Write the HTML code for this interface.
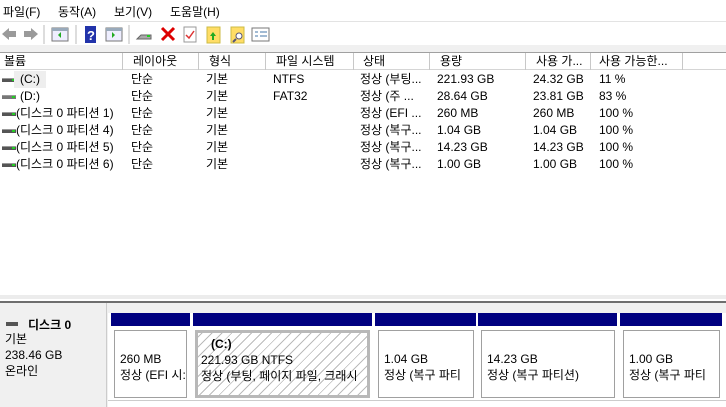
<!DOCTYPE html>
<html><head><meta charset="utf-8"><style>
*{margin:0;padding:0;box-sizing:border-box}
body{width:726px;height:407px;overflow:hidden;background:#fff;font-family:"Liberation Sans","Noto Sans CJK KR",sans-serif;font-size:12px;color:#000;position:relative}
.a{position:absolute;white-space:nowrap}
.menu span{position:absolute;top:3px}
.hdr{position:absolute;top:52px;left:0;width:726px;height:18px;border-top:1px solid #a0a0a0;border-bottom:1px solid #d5d5d5;background:#fff}
.hdr div{position:absolute;top:0;height:17px;line-height:16px;border-right:1px solid #c8c8c8;padding-left:4px}
.row{position:absolute;left:0;width:726px;height:17px;line-height:17px}
.row span{position:absolute}
.ico{position:absolute;left:2px;top:7px;width:14px;height:4px;background:#555;border-top:1px solid #999}
.ico:after{content:"";position:absolute;right:1px;top:0;width:3px;height:2px;background:#2c2}
.bar{position:absolute;top:313px;height:13px;background:#000080}
.box{position:absolute;top:330px;height:68px;border:1px solid #a0a0a0;background:#fff;padding:20px 0 0 5px;line-height:16px;overflow:hidden;white-space:nowrap}
</style></head><body>
<div class="menu"><span style="left:3px">파일(F)</span><span style="left:58px">동작(A)</span><span style="left:114px">보기(V)</span><span style="left:170px">도움말(H)</span></div>
<div class="a" style="left:0;top:21px;width:726px;height:1px;background:#e3e3e3"></div>
<div class="a" style="left:0;top:45px;width:726px;height:7px;background:#f0f0f0"></div>
<svg class="a" style="left:0;top:22px" width="280" height="23">
<path d="M2 12 l7-6 v3 h7 v6 h-7 v3z" fill="#9a9a9a"/>
<path d="M38 12 l-7-6 v3 h-7 v6 h7 v3z" fill="#9a9a9a"/>
<line x1="44" y1="3" x2="44" y2="22" stroke="#bbb"/>
<rect x="52" y="6" width="16" height="13" fill="#eef" stroke="#777"/><rect x="52" y="6" width="16" height="3" fill="#9ab"/><path d="M61 10 l-3 3 3 3z" fill="#2a2"/>
<line x1="76" y1="3" x2="76" y2="22" stroke="#bbb"/>
<rect x="85" y="4" width="11" height="17" fill="#2233aa"/><text x="87" y="18" fill="#fff" font-size="13" font-weight="bold">?</text>
<rect x="106" y="6" width="16" height="13" fill="#eef" stroke="#777"/><rect x="106" y="6" width="16" height="3" fill="#9ab"/><path d="M112 10 l3 3 -3 3z" fill="#2a2"/>
<line x1="129" y1="3" x2="129" y2="22" stroke="#bbb"/>
<path d="M137 17 l4-4 h10 v4 h-10z" fill="#aaa" stroke="#666"/><rect x="147" y="13" width="3" height="2" fill="#2c2"/>
<path d="M162 6 l12 12 M174 6 l-12 12" stroke="#d00" stroke-width="3"/>
<rect x="184" y="5" width="12" height="15" fill="#fff" stroke="#999"/><path d="M186 13 l3 3 5-7" stroke="#d33" fill="none" stroke-width="1.5"/>
<rect x="207" y="5" width="13" height="16" fill="#fd6" stroke="#cb4"/><path d="M213 10 l-3 4 h2 v4 h2 v-4 h2z" fill="#2a2"/>
<rect x="231" y="5" width="13" height="16" fill="#fd6" stroke="#cb4"/><circle cx="239" cy="14" r="3" fill="#fff" stroke="#557"/><line x1="236" y1="17" x2="233" y2="20" stroke="#557" stroke-width="2"/>
<rect x="252" y="6" width="17" height="13" fill="#fff" stroke="#777"/><path d="M255 10h3M255 14h3M260 10h7M260 14h7" stroke="#47a"/>
</svg>
<div class="hdr">
<div style="left:0;width:123px">볼륨</div>
<div style="left:123px;width:76px;padding-left:10px">레이아웃</div>
<div style="left:199px;width:67px;padding-left:10px">형식</div>
<div style="left:266px;width:88px;padding-left:10px">파일 시스템</div>
<div style="left:354px;width:76px;padding-left:9px">상태</div>
<div style="left:430px;width:96px;padding-left:10px">용량</div>
<div style="left:526px;width:65px;padding-left:10px">사용 가...</div>
<div style="left:591px;width:92px;padding-left:8px">사용 가능한...</div>
</div>
<div class="row" style="top:71px"><i class="ico"></i><span style="left:14px;background:#eee;padding:0 6px">(C:)</span><span style="left:131px">단순</span><span style="left:206px">기본</span><span style="left:273px">NTFS</span><span style="left:360px">정상 (부팅...</span><span style="left:437px">221.93 GB</span><span style="left:533px">24.32 GB</span><span style="left:599px">11 %</span></div>
<div class="row" style="top:88px"><i class="ico" style="background:#777"></i><span style="left:20px">(D:)</span><span style="left:131px">단순</span><span style="left:206px">기본</span><span style="left:273px">FAT32</span><span style="left:360px">정상 (주 ...</span><span style="left:437px">28.64 GB</span><span style="left:533px">23.81 GB</span><span style="left:599px">83 %</span></div>
<div class="row" style="top:105px"><i class="ico"></i><span style="left:16px">(디스크 0 파티션 1)</span><span style="left:131px">단순</span><span style="left:206px">기본</span><span style="left:360px">정상 (EFI ...</span><span style="left:437px">260 MB</span><span style="left:533px">260 MB</span><span style="left:599px">100 %</span></div>
<div class="row" style="top:122px"><i class="ico"></i><span style="left:16px">(디스크 0 파티션 4)</span><span style="left:131px">단순</span><span style="left:206px">기본</span><span style="left:360px">정상 (복구...</span><span style="left:437px">1.04 GB</span><span style="left:533px">1.04 GB</span><span style="left:599px">100 %</span></div>
<div class="row" style="top:139px"><i class="ico"></i><span style="left:16px">(디스크 0 파티션 5)</span><span style="left:131px">단순</span><span style="left:206px">기본</span><span style="left:360px">정상 (복구...</span><span style="left:437px">14.23 GB</span><span style="left:533px">14.23 GB</span><span style="left:599px">100 %</span></div>
<div class="row" style="top:156px"><i class="ico"></i><span style="left:16px">(디스크 0 파티션 6)</span><span style="left:131px">단순</span><span style="left:206px">기본</span><span style="left:360px">정상 (복구...</span><span style="left:437px">1.00 GB</span><span style="left:533px">1.00 GB</span><span style="left:599px">100 %</span></div>
<div class="a" style="left:0;top:295px;width:726px;height:4px;background:#ececec"></div>
<div class="a" style="left:0;top:301px;width:726px;height:2px;background:#6e6e6e"></div>
<div class="a" style="left:0;top:303px;width:726px;height:104px;background:#f0f0f0"></div>
<div class="a" style="left:106px;top:303px;width:1px;height:104px;background:#ccc"></div>
<div class="a" style="left:0;top:303px;width:106px;height:104px;background:#f0f0f0"></div>
<div class="a" style="left:6px;top:322px;width:12px;height:4px;background:#555"></div>
<div class="a" style="left:28px;top:316px;font-weight:bold">디스크 0</div>
<div class="a" style="left:5px;top:331px;line-height:16px">기본<br>238.46 GB<br>온라인</div>
<div class="a" style="left:108px;top:313px;width:618px;height:94px;background:#fff"></div>
<div class="a" style="left:108px;top:400px;width:618px;height:1px;background:#ccc"></div>
<div class="bar" style="left:111px;width:79px"></div>
<div class="bar" style="left:193px;width:179px"></div>
<div class="bar" style="left:375px;width:101px"></div>
<div class="bar" style="left:478px;width:139px"></div>
<div class="bar" style="left:620px;width:102px"></div>
<div class="box" style="left:114px;width:73px">260 MB<br>정상 (EFI 시:</div>
<div class="box" style="left:195px;width:175px;border:3px solid #b8b8b8;padding:3px 0 0 3px;background:repeating-linear-gradient(-45deg,#fff 0 6px,#bbb 6px 7px)"><b style="padding-left:10px">(C:)</b><br>221.93 GB NTFS<br>정상 (부팅, 페이지 파일, 크래시</div>
<div class="box" style="left:378px;width:96px">1.04 GB<br>정상 (복구 파티</div>
<div class="box" style="left:481px;width:134px">14.23 GB<br>정상 (복구 파티션)</div>
<div class="box" style="left:623px;width:97px">1.00 GB<br>정상 (복구 파티</div>
</body></html>
